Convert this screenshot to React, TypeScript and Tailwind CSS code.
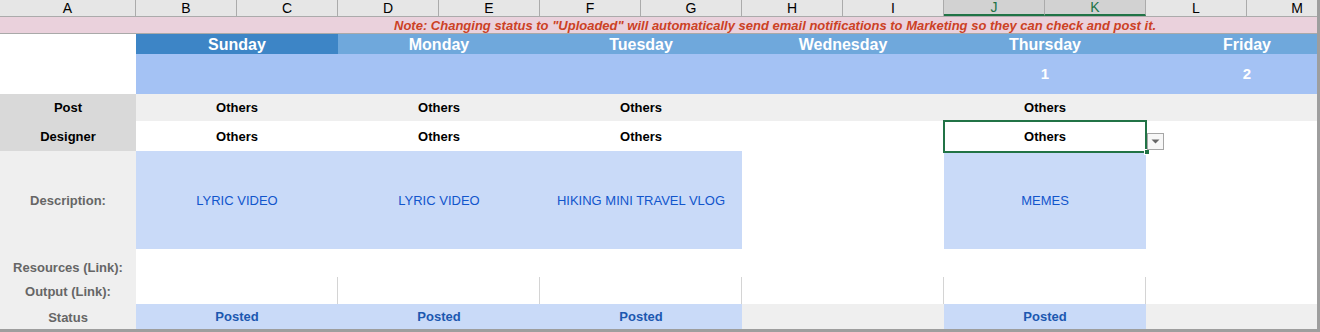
import React from 'react';

const FONT = { fontFamily: '"Liberation Sans", Arial, sans-serif' };

const COLS = ['A', 'B', 'C', 'D', 'E', 'F', 'G', 'H', 'I', 'J', 'K', 'L', 'M'];

type Day = {
  name: string;
  date?: string;
  post?: string;
  designer?: string;
  description?: string;
  status?: string;
};

const DAYS: Day[] = [
  { name: 'Sunday', post: 'Others', designer: 'Others', description: 'LYRIC VIDEO', status: 'Posted' },
  { name: 'Monday', post: 'Others', designer: 'Others', description: 'LYRIC VIDEO', status: 'Posted' },
  { name: 'Tuesday', post: 'Others', designer: 'Others', description: 'HIKING MINI TRAVEL VLOG', status: 'Posted' },
  { name: 'Wednesday' },
  { name: 'Thursday', date: '1', post: 'Others', designer: 'Others', description: 'MEMES', status: 'Posted' },
  { name: 'Friday', date: '2' },
];

const Row = ({ className, children }: { className: string; children: React.ReactNode }) => (
  <div className={`grid grid-cols-[136px_repeat(6,202px)] ${className}`}>{children}</div>
);

const Label = ({ text, className }: { text: string; className: string }) => (
  <div className={`flex justify-center text-[13px] font-bold ${className}`}>{text}</div>
);

export default function App() {
  return (
    <div
      className="w-[1320px] h-[332px] overflow-hidden bg-white border-r-[3px] border-b-[3px] border-[#9e9e9e]"
      style={FONT}
    >
      <div className="relative w-[1317px] h-[329px] overflow-hidden">
        {/* column letters */}
        <div className="grid grid-cols-[136px_repeat(12,101px)] h-[17px] bg-[#e6e6e6] border-b border-[#ababab]">
          {COLS.map((c) => {
            const sel = c === 'J' || c === 'K';
            return (
              <div
                key={c}
                className={`flex items-center justify-center text-[14px] leading-none border-r border-[#ababab] ${
                  sel ? 'bg-[#d2d2d2] text-[#217346] border-b-2 border-b-[#217346]' : 'text-black'
                }`}
              >
                {c}
              </div>
            );
          })}
        </div>

        {/* note */}
        <div className="h-[17px] bg-[#ead1dc] border-b border-[#a9a9a9] flex items-center pl-[394px]">
          <span className="text-[13px] font-bold italic text-[#cc4125] whitespace-nowrap leading-none">
            Note: Changing status to "Uploaded" will automatically send email notifications to Marketing so they can check and post it.
          </span>
        </div>

        {/* day names */}
        <Row className="h-[20px]">
          <div className="bg-white" />
          {DAYS.map((d, i) => (
            <div
              key={d.name}
              className={`flex items-center justify-center pt-[2px] text-[16px] font-bold text-white leading-none ${
                i === 0 ? 'bg-[#3d85c6]' : 'bg-[#6fa8dc]'
              }`}
            >
              {d.name}
            </div>
          ))}
        </Row>

        {/* dates */}
        <Row className="h-[40px]">
          <div className="bg-white" />
          {DAYS.map((d) => (
            <div key={d.name} className="bg-[#a4c2f4] flex items-center justify-center pt-[1px] text-[15px] font-bold text-white">
              {d.date}
            </div>
          ))}
        </Row>

        {/* post */}
        <Row className="h-[27px]">
          <Label text="Post" className="items-center pt-[1px] bg-[#d9d9d9] text-black" />
          {DAYS.map((d) => (
            <div key={d.name} className="bg-[#efefef] flex items-center justify-center pt-[1px] text-[13px] font-bold text-black">
              {d.post}
            </div>
          ))}
        </Row>

        {/* designer */}
        <Row className="h-[30px]">
          <Label text="Designer" className="items-center pt-[2px] bg-[#d9d9d9] text-black" />
          {DAYS.map((d) => (
            <div key={d.name} className="bg-white flex items-center justify-center pt-[2px] text-[13px] font-bold text-black">
              {d.designer}
            </div>
          ))}
        </Row>

        {/* description */}
        <Row className="h-[98px]">
          <Label text="Description:" className="items-center pt-[2px] bg-[#efefef] text-[#666666]" />
          {DAYS.map((d) => (
            <div
              key={d.name}
              className={`flex items-center justify-center pt-[2px] text-[13px] text-[#1155cc] ${
                d.description ? 'bg-[#c9daf8]' : 'bg-white'
              }`}
            >
              {d.description}
            </div>
          ))}
        </Row>

        {/* resources */}
        <Row className="h-[28px]">
          <Label text="Resources (Link):" className="items-end pb-0 bg-[#efefef] text-[#666666]" />
          {DAYS.map((d) => (
            <div key={d.name} className="bg-white" />
          ))}
        </Row>

        {/* output */}
        <Row className="h-[27px]">
          <Label text="Output (Link):" className="items-center pt-[2px] bg-[#efefef] text-[#666666]" />
          {DAYS.map((d) => (
            <div key={d.name} className="bg-white border-r border-[#d4d4d4]" />
          ))}
        </Row>

        {/* status */}
        <Row className="h-[25px]">
          <Label text="Status" className="items-center pt-[2px] bg-[#efefef] text-[#666666]" />
          {DAYS.map((d) => (
            <div
              key={d.name}
              className={`flex items-center justify-center pt-[1px] text-[13px] font-bold text-[#1c58b0] ${
                d.status ? 'bg-[#c9daf8]' : 'bg-[#efefef]'
              }`}
            >
              {d.status}
            </div>
          ))}
        </Row>

        {/* selected cell J-K designer */}
        <div className="absolute left-[943px] top-[120px] w-[204px] h-[33px] border-2 border-[#217346] pointer-events-none" />
        <div className="absolute left-[1144px] top-[149px] w-[6px] h-[6px] bg-[#217346] border border-white" />
        <div className="absolute left-[1147px] top-[133px] w-[17px] h-[17px] bg-[#f7f7f7] border border-[#a6a6a6] flex items-center justify-center">
          <svg width="9" height="5" viewBox="0 0 9 5">
            <path d="M0.5 0.5 L8.5 0.5 L4.5 4.5 Z" fill="#666" />
          </svg>
        </div>
      </div>
    </div>
  );
}
